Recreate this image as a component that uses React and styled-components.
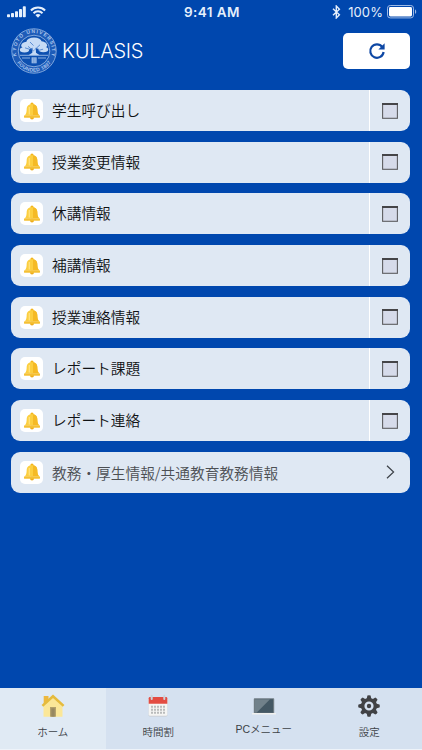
import React from "react";
import styled, { createGlobalStyle } from "styled-components";

const notices = [
  "学生呼び出し",
  "授業変更情報",
  "休講情報",
  "補講情報",
  "授業連絡情報",
  "レポート課題",
  "レポート連絡",
];

export default function App() {
  return (
    <Screen>
      <GlobalStyle />
      <StatusBar>
        <StatusSide>
          <SignalIcon />
          <WifiIcon />
        </StatusSide>
        <Clock>9:41 AM</Clock>
        <StatusSide $end>
          <BluetoothIcon />
          <Percent>100%</Percent>
          <BatteryIcon />
        </StatusSide>
      </StatusBar>
      <Header>
        <Emblem />
        <Title>KULASIS</Title>
        <ReloadButton aria-label="reload">
          <ReloadIcon />
        </ReloadButton>
      </Header>
      <List>
        {notices.map((label) => (
          <Row key={label}>
            <BellBox>
              <BellIcon />
            </BellBox>
            <RowLabel>{label}</RowLabel>
            <RowAction>
              <WindowIcon />
            </RowAction>
          </Row>
        ))}
        <Row>
          <BellBox>
            <BellIcon />
          </BellBox>
          <RowLabel $muted>教務・厚生情報/共通教育教務情報</RowLabel>
          <RowAction $plain>
            <ChevronIcon />
          </RowAction>
        </Row>
      </List>
      <TabBar>
        <Tab $active>
          <HouseIcon />
          <TabLabel>ホーム</TabLabel>
        </Tab>
        <Tab>
          <CalendarIcon />
          <TabLabel>時間割</TabLabel>
        </Tab>
        <Tab>
          <LaptopIcon />
          <TabLabel $raised>PCメニュー</TabLabel>
        </Tab>
        <Tab>
          <GearIcon />
          <TabLabel>設定</TabLabel>
        </Tab>
      </TabBar>
    </Screen>
  );
}

function SignalIcon() {
  return (
    <svg width="19" height="12" viewBox="0 0 19 12" fill="#e6f0fc">
      <rect x="0" y="8.2" width="3" height="3.1" rx="0.8" />
      <rect x="4" y="7" width="3" height="4.3" rx="0.8" />
      <rect x="8" y="5.2" width="3" height="6.1" rx="0.8" />
      <rect x="12" y="3" width="3" height="8.3" rx="0.8" />
      <rect x="15.8" y="0.2" width="3" height="11.1" rx="0.8" />
    </svg>
  );
}

function WifiIcon() {
  return (
    <svg width="16" height="12" viewBox="0 0 16 12" fill="none">
      <path d="M0.9 4.5a10 10 0 0 1 14.2 0" stroke="#e6f0fc" strokeWidth="2" />
      <path d="M3.5 7.2a6.4 6.4 0 0 1 9 0" stroke="#e6f0fc" strokeWidth="2" />
      <path d="M5.4 9.1a3.8 3.8 0 0 1 5.2 0L8 11.7z" fill="#e6f0fc" />
    </svg>
  );
}

function BluetoothIcon() {
  return (
    <svg width="9" height="14" viewBox="0 0 9 14" fill="none">
      <path
        d="M1 3.8l6.4 6L4.3 13V1l3.1 3.2L1 10.2"
        stroke="#e6f0fc"
        strokeWidth="1.4"
      />
    </svg>
  );
}

function BatteryIcon() {
  return (
    <svg width="30" height="14" viewBox="0 0 30 14">
      <rect
        x="0.5"
        y="0.5"
        width="26"
        height="12.4"
        rx="2.7"
        fill="none"
        stroke="#9dbae6"
      />
      <rect x="2" y="2" width="23" height="9.4" rx="1.4" fill="#fff" />
      <path d="M28 4.5c1.6 0.6 1.6 3.8 0 4.4z" fill="#9dbae6" />
    </svg>
  );
}

function Emblem() {
  return (
    <svg width="46" height="46" viewBox="0 0 46 46">
      <defs>
        <path id="arcTop" d="M6.5 30.2A18 18 0 1 1 39.5 30.2" />
        <path id="arcBottom" d="M3.6 30A20.6 20.6 0 0 0 42.4 30" />
      </defs>
      <circle cx="23" cy="23" r="22.2" fill="#1e5cb8" stroke="#7fa6dc" />
      <circle cx="23" cy="23" r="15.8" fill="#0d50b0" stroke="#8eb2e2" strokeWidth="0.9" />
      <EmblemText>
        <textPath href="#arcTop" startOffset="50%" textAnchor="middle" textLength="66">
          KYOTO UNIVERSITY
        </textPath>
      </EmblemText>
      <EmblemText>
        <textPath href="#arcBottom" startOffset="50%" textAnchor="middle" textLength="40">
          FOUNDED 1897
        </textPath>
      </EmblemText>
      <g fill="#c6dbf5">
        <ellipse cx="23" cy="13.5" rx="7.5" ry="3.9" />
        <ellipse cx="16.5" cy="17.6" rx="6.3" ry="3.9" />
        <ellipse cx="29.5" cy="17.2" rx="6.6" ry="3.9" />
        <ellipse cx="13.5" cy="21.8" rx="4.7" ry="2.6" />
        <ellipse cx="32.4" cy="21.5" rx="4.8" ry="2.8" />
        <path d="M21.5 17h3.2l0.3 7.8 3.7 2.5H17.5l3.8-2.5z" />
      </g>
      <path
        d="M22.8 23l-5.8-4.6M23.4 22l5.6-5.2M19 14l3.5 3.6M14 19.8l5.2 1.7M27.5 22.4l4.6-1.2"
        stroke="#3f79c9"
        strokeWidth="0.8"
        fill="none"
      />
      <path d="M9 27.3h28M11 30h8M27 30h8" stroke="#9bbbe6" strokeWidth="0.9" />
      <rect x="20.6" y="29.3" width="5" height="6" fill="#a9c6eb" />
      <path d="M22.2 29.3v6M24 29.3v6" stroke="#2e69bd" strokeWidth="0.5" />
    </svg>
  );
}

function ReloadIcon() {
  return (
    <svg width="18" height="18" viewBox="0 0 18 18">
      <path
        d="M14.3 5A6.7 6.7 0 1 0 15.6 10"
        fill="none"
        stroke="#0d47a4"
        strokeWidth="2.2"
      />
      <path d="M16.6 1.3v6.2h-6.2z" fill="#0d47a4" />
    </svg>
  );
}

function BellIcon() {
  return (
    <svg width="18" height="18" viewBox="0 0 18 18">
      <circle cx="9" cy="2" r="1.6" fill="#f3b51d" />
      <circle cx="9" cy="15.6" r="2" fill="#edac1b" />
      <path
        d="M9 2.2c-3.6 0-5.2 2-5.3 4.6-.1 3.3-.5 4.9-1.7 6.4h14c-1.2-1.5-1.6-3.1-1.7-6.4C14.2 4.2 12.6 2.2 9 2.2z"
        fill="#fccf40"
      />
      <path
        d="M10 2.2c2.9.2 4.2 2.1 4.3 4.6.1 3.3.5 4.9 1.7 6.4h-6z"
        fill="#f5ba25"
      />
      <path d="M6.3 5v7.5" stroke="#ffe17c" strokeWidth="1.3" />
      <rect x="1" y="13.2" width="16" height="2.6" rx="0.9" fill="#f5c034" />
    </svg>
  );
}

function WindowIcon() {
  return (
    <svg width="16" height="16" viewBox="0 0 16 16">
      <rect
        x="0.6"
        y="0.6"
        width="14.8"
        height="14.7"
        fill="#d6dbea"
        stroke="#5c5d60"
        strokeWidth="1.1"
      />
      <rect x="0" y="0" width="16" height="2" fill="#454548" />
    </svg>
  );
}

function ChevronIcon() {
  return (
    <svg width="9" height="14" viewBox="0 0 9 14">
      <path d="M1 0.7L7.6 7 1 13.3" fill="none" stroke="#3d4248" strokeWidth="1.2" />
    </svg>
  );
}

function HouseIcon() {
  return (
    <svg width="24" height="24" viewBox="0 0 24 24">
      <rect x="2.7" y="2" width="4.8" height="8" fill="#edb83d" />
      <path d="M12 3L2.5 12v10.7h19V12z" fill="#fbe798" />
      <path
        d="M1.4 11.9L12 2.3l10.6 9.6"
        fill="none"
        stroke="#e5bb3d"
        strokeWidth="2.5"
      />
      <rect x="9" y="13" width="6" height="9.7" fill="#b3a16b" />
      <rect x="10.3" y="14.3" width="3.4" height="8.4" fill="#978860" />
    </svg>
  );
}

function CalendarIcon() {
  return (
    <svg width="24" height="24" viewBox="0 0 24 24">
      <rect x="2.7" y="4" width="18.6" height="18.6" rx="1.4" fill="#c8cacc" />
      <rect x="2.7" y="4" width="18.6" height="17.8" rx="1.2" fill="#f5f5f3" />
      <path d="M2.7 9.8V4.3q0-1.3 1.3-1.3h16q1.3 0 1.3 1.3v5.5z" fill="#e34c42" />
      <path
        d="M5.7 1.7v3.2M18.3 1.7v3.2"
        stroke="#c9d4dc"
        strokeWidth="2"
        strokeLinecap="round"
      />
      <path
        d="M5 12.8h14M5 15.8h14M5 18.8h14"
        stroke="#b9bbbb"
        strokeWidth="2"
        strokeDasharray="2 1"
      />
    </svg>
  );
}

function LaptopIcon() {
  return (
    <svg width="24" height="24" viewBox="0 0 24 24">
      <rect x="1.8" y="4.2" width="20.4" height="15.3" rx="0.7" fill="#6f7b82" />
      <rect x="3" y="5.2" width="18" height="13.5" fill="#445864" />
      <path d="M3 5.2h15L4.5 18.7H3z" fill="#71818a" />
      <rect x="0" y="19" width="24" height="1.5" rx="0.5" fill="#f1f1ef" />
    </svg>
  );
}

function GearIcon() {
  const teeth = [0, 45, 90, 135, 180, 225, 270, 315];
  return (
    <svg width="24" height="24" viewBox="0 0 24 24">
      <g fill="#414245">
        {teeth.map((angle) => (
          <path
            key={angle}
            d="M9.6 5.2L10.4 1.5q1.6-.7 3.2 0l.8 3.7z"
            transform={`rotate(${angle} 12 12)`}
          />
        ))}
      </g>
      <circle cx="12" cy="12" r="6.3" fill="none" stroke="#414245" strokeWidth="3.4" />
      <circle cx="12" cy="12" r="2.2" fill="#414245" />
    </svg>
  );
}

const GlobalStyle = createGlobalStyle`
  * {
    box-sizing: border-box;
  }

  body {
    margin: 0;
    background: #0047ae;
  }

  svg {
    display: block;
    flex: none;
  }
`;

const Screen = styled.div`
  display: flex;
  flex-direction: column;
  width: 422px;
  height: 750px;
  overflow: hidden;
  background: #0047ae;
  font-family: "Noto Sans CJK JP", sans-serif;
`;

const StatusBar = styled.div`
  display: grid;
  grid-template-columns: 1fr auto 1fr;
  align-items: center;
  height: 24px;
  padding: 0 5px 0 7px;
  color: #e6f0fc;
  font-family: Inter, sans-serif;
`;

const StatusSide = styled.div`
  display: flex;
  align-items: center;
  justify-content: ${(p) => (p.$end ? "flex-end" : "flex-start")};
  gap: 4px;
`;

const Clock = styled.span`
  font-size: 13.5px;
  font-weight: 600;
  letter-spacing: 0.45px;
`;

const Percent = styled.span`
  margin-left: 3px;
  font-size: 13px;
  letter-spacing: 0.1px;
`;

const Header = styled.header`
  display: flex;
  align-items: center;
  height: 54px;
  padding: 0 12px 0 11px;
`;

const Title = styled.h1`
  margin: 0 auto 0 5px;
  color: #fff;
  font-family: Inter, sans-serif;
  font-size: 20px;
  font-weight: 350;
  letter-spacing: -0.25px;
`;

const EmblemText = styled.text`
  fill: #a9c6ee;
  font-family: "Liberation Sans", sans-serif;
  font-size: 5px;
  font-weight: 700;
`;

const ReloadButton = styled.button`
  display: flex;
  align-items: center;
  justify-content: center;
  width: 67px;
  height: 36px;
  padding: 0;
  border: 0;
  border-radius: 5px;
  background: #fff;
`;

const List = styled.main`
  display: flex;
  flex: 1;
  flex-direction: column;
  gap: 10.7px;
  padding: 12px 12px 0 11px;
`;

const Row = styled.div`
  display: flex;
  align-items: center;
  flex: none;
  height: 41px;
  padding-left: 9px;
  border-radius: 9px;
  background: #dfe8f3;
`;

const BellBox = styled.div`
  display: flex;
  align-items: center;
  justify-content: center;
  width: 23px;
  height: 23px;
  border-radius: 5px;
  background: #fff;
`;

const RowLabel = styled.span`
  flex: 1;
  padding: ${(p) => (p.$muted ? "2px 0 0 9px" : "0 0 1px 9px")};
  color: ${(p) => (p.$muted ? "#4c4f53" : "#101214")};
  font-size: 14.7px;
  font-weight: 350;
  line-height: 20px;
  white-space: nowrap;
`;

const RowAction = styled.div`
  display: flex;
  align-items: center;
  justify-content: center;
  width: 41px;
  height: 100%;
  padding-left: ${(p) => (p.$plain ? "1px" : "0")};
  border-left: 1px solid ${(p) => (p.$plain ? "transparent" : "#fff")};
`;

const TabBar = styled.nav`
  display: grid;
  grid-template-columns: repeat(4, 1fr);
  height: 62px;
  flex: none;
  border-bottom: 1px solid #eef3f9;
`;

const Tab = styled.div`
  display: flex;
  flex-direction: column;
  align-items: center;
  padding-top: 6px;
  background: ${(p) => (p.$active ? "#e0eaf4" : "#d5e1f0")};
`;

const TabLabel = styled.span`
  margin-top: ${(p) => (p.$raised ? "3px" : "6px")};
  color: #3c4147;
  font-family: "Liberation Sans", "Noto Sans CJK JP", sans-serif;
  font-size: 10.5px;
  font-weight: 350;
  line-height: 16px;
`;
